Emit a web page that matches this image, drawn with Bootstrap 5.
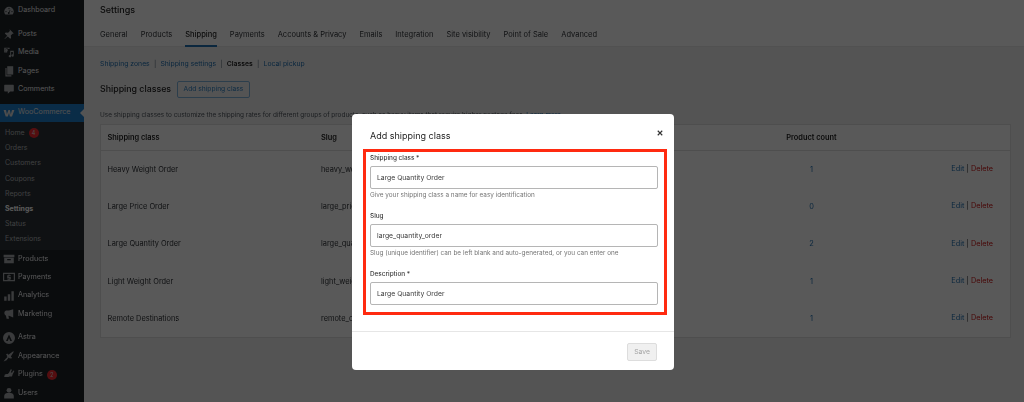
<!doctype html>
<html lang="en">
<head>
<meta charset="utf-8">
<title>Shipping classes</title>
<link href="https://cdn.jsdelivr.net/npm/bootstrap@5.3.0/dist/css/bootstrap.min.css" rel="stylesheet">
<style>
html,body{height:402px;overflow:hidden}
body{font-family:Inter,"Liberation Sans",sans-serif;background:#f0f0f1;font-size:7.5px;color:#1e1e1e}
.page-shell{height:402px;filter:blur(.6px)}
.wp-side{width:84px;flex:none;background:#1d2327;color:#f0f0f1;height:402px;overflow:hidden;padding-top:1.5px}
.side-item{height:18.4px;padding-left:18px;font-size:7.2px;position:relative;white-space:nowrap}
.side-item svg{position:absolute;left:3px;top:3px;width:12px;height:12px;fill:#a7aaad}
.side-sep{height:5.2px}
.side-woo{background:#1f7ecb;color:#e6e6e6;height:18px}
.side-woo::after{content:"";position:absolute;right:0;top:5px;border:4px solid transparent;border-right-color:#f0f0f1;border-left:0}
.side-sub{background:#2c3338;padding:4px 0 0;height:128px}
.sub-item{height:15.15px;padding-left:5px;font-size:7px;color:#b4b7ba}
.sub-item.on{color:#fff;font-weight:700}
.side-badge{width:10px;height:10px;border-radius:50%;background:#f02a30;color:#ddd;font-size:5.5px;line-height:10px;text-align:center;margin-left:4px}
.wp-main{min-width:0}
.main-head{background:#fff;height:47px;padding:0 0 0 16px;border-bottom:1px solid #e8e8e8}
.main-title{font-size:9px;font-weight:500;line-height:20px;height:26px}
.tab-row{gap:13px;height:21px}
.tab-link{font-size:7.5px;color:#2f3237;text-decoration:none;height:21px;line-height:18px;white-space:nowrap}
.tab-link.on{border-bottom:2px solid #2271b1;color:#1e1e1e;font-weight:500}
.main-body{padding:9px 12.5px 0 16px}
.sub-links{font-size:6.85px;height:16px;line-height:16px;gap:4.2px;color:#5a6a78;white-space:nowrap}
.sub-links a{color:#2271b1;text-decoration:none}
.sub-links b{font-weight:600;color:#1e1e1e}
.head-row{height:27px;margin-top:4px}
.head-title{font-size:8.8px;font-weight:500;margin:0 6px 0 0}
.add-btn{--bs-btn-font-size:6.7px;--bs-btn-padding-x:5.5px;--bs-btn-padding-y:0;--bs-btn-border-radius:2px;--bs-btn-color:#2b7fc0;--bs-btn-border-color:#7fb2da;height:17px;line-height:15px;white-space:nowrap}
.lead-text{font-size:6.43px;line-height:12px;height:16px;margin:5px 0 0;padding-top:1px;color:#50575e;white-space:nowrap}
.lead-text a{color:#2271b1;text-decoration:none}
.class-table{--bs-table-bg:#fff;--bs-table-border-color:#f0f0f0;background:#fff;border:1px solid #e0e0e0;table-layout:fixed;width:911px;margin:0;font-size:7.4px}
.class-table th{font-weight:600;font-size:7.4px;height:26px;padding:0 0 0 6.5px;vertical-align:middle;color:#1e1e1e;border-bottom:1px solid #e0e0e0}
.class-table td{height:37.4px;padding:0 0 0 6.5px;vertical-align:middle;color:#2f3237;border-bottom-width:0}
.class-table .num{text-align:center;padding:0}
.class-table .num a{color:#2271b1;text-decoration:none}
.class-table .act{text-align:right;padding:0 17px 0 0;white-space:nowrap;font-size:7.3px}
.act a{text-decoration:none;color:#2271b1}
.act a.del{color:#cc1818}
.dim-layer{position:absolute;inset:0;background:rgba(0,0,0,.65)}
.dlg{position:absolute;top:114px;left:352px;width:322px;height:256px;border:0;border-radius:4px;background:#fff;filter:blur(.4px);color:#1e1e1e}
.dlg-head{height:35px;padding:15px 11px 0 18px}
.dlg-title{font-size:9px;font-weight:400;margin:0;line-height:14px}
.dlg-x{width:6px;height:6px;margin-top:1px;fill:none;stroke:#333;stroke-width:1.5}
.mark-box{border:3px solid #ff2a10;margin:0 7px 0 11px;height:166px;padding:2px 6px 0 4px}
.fld-label{font-size:6.4px;font-weight:500;line-height:9px;height:9px;margin:0 0 3px;display:block;color:#3a3a3a}
.fld-input{border-radius:2px;height:23px;min-height:0;font-size:6.8px;padding:0 6px;color:#3a3a3a;border:1px solid #b5b5b5;box-shadow:none}
.fld-help{font-size:6.4px;line-height:9px;height:9px;margin-top:2px;color:#757575;white-space:nowrap}
.fld-block{height:58px}
.dlg-foot{border-top:1px solid #e6e6e6;margin-top:16px;height:39px;padding:11px 17px 0 0}
.save-btn{--bs-btn-font-size:6.8px;--bs-btn-padding-x:0;--bs-btn-padding-y:0;--bs-btn-border-radius:2px;--bs-btn-disabled-color:#a5a5a5;--bs-btn-disabled-bg:#f0f0f0;--bs-btn-disabled-border-color:#ddd;--bs-btn-disabled-opacity:1;width:30px;height:18px}
</style>
</head>
<body>
<div class="page-shell d-flex">
  <nav class="wp-side">
    <div class="side-item d-flex align-items-center"><svg viewBox="0 0 20 20"><path d="M10 3a8 8 0 0 0-8 8c0 2 .7 3.700 1.900 5h12.200A8 8 0 0 0 18 11a8 8 0 0 0-8-8zm0 2a1 1 0 1 1 0 2 1 1 0 0 1 0-2zm-5 5a1 1 0 1 1 0 2 1 1 0 0 1 0-2zm10 0a1 1 0 1 1 0 2 1 1 0 0 1 0-2zm-3.500-2 .9.500-1.600 3.700a1.600 1.600 0 1 1-.9-.4z"/></svg>Dashboard</div>
    <div class="side-sep"></div>
    <div class="side-item d-flex align-items-center"><svg viewBox="0 0 20 20"><path d="M11 2l7 7-2 .5-3 3 .5 4-1.500 1.500-4-4-5 4.500-.5-.5 4.500-5-4-4L4.500 7.500l4 .5 3-3z"/></svg>Posts</div>
    <div class="side-item d-flex align-items-center"><svg viewBox="0 0 20 20"><path d="M2 3h9v2H9L8 4H5L4 5v4h3v2H2zm4 2a2 2 0 0 1 0 4 2 2 0 0 1 0-4zm6 3h6v8a2 2 0 1 1-1.500-2V10h-3v7a2 2 0 1 1-1.500-2z"/></svg>Media</div>
    <div class="side-item d-flex align-items-center"><svg viewBox="0 0 20 20"><path d="M7 2h10v14H7z"/><path d="M4 5h2v12h8v2H4z"/></svg>Pages</div>
    <div class="side-item d-flex align-items-center"><svg viewBox="0 0 20 20"><path d="M3 3h14a1 1 0 0 1 1 1v9a1 1 0 0 1-1 1h-5l-4 4v-4H3a1 1 0 0 1-1-1V4a1 1 0 0 1 1-1z"/></svg>Comments</div>
    <div class="side-sep"></div>
    <div class="side-item side-woo d-flex align-items-center"><svg viewBox="0 0 20 20" style="fill:#ddd"><path d="M1 5h4l1.500 7L9 5h2.500l1.500 7 2-7h4l-4 11h-3.500L10 10l-2 6H4.500z"/></svg>WooCommerce</div>
    <div class="side-sub">
      <div class="sub-item d-flex align-items-center">Home<span class="side-badge">4</span></div>
      <div class="sub-item d-flex align-items-center">Orders</div>
      <div class="sub-item d-flex align-items-center">Customers</div>
      <div class="sub-item d-flex align-items-center">Coupons</div>
      <div class="sub-item d-flex align-items-center">Reports</div>
      <div class="sub-item on d-flex align-items-center">Settings</div>
      <div class="sub-item d-flex align-items-center">Status</div>
      <div class="sub-item d-flex align-items-center">Extensions</div>
    </div>
    <div class="side-item d-flex align-items-center"><svg viewBox="0 0 20 20"><path d="M1 3h18v4H1zM2 8h16v9H2zm5 2v2h6v-2z" fill-rule="evenodd"/></svg>Products</div>
    <div class="side-item d-flex align-items-center"><svg viewBox="0 0 20 20"><path fill-rule="evenodd" d="M0 3h20v14H0zm2 2v10h16V5zm7 1h2v1h2v1.500h-3.500v1H13V14h-2v1H9v-1H7v-1.500h3.500v-1H7V7h2z"/></svg>Payments</div>
    <div class="side-item d-flex align-items-center"><svg viewBox="0 0 20 20"><path d="M2 11h4v7H2zM8 7h4v11H8zM14 2h4v16h-4z"/></svg>Analytics</div>
    <div class="side-item d-flex align-items-center"><svg viewBox="0 0 20 20"><path d="M17 2v14l-7-3H9l1 5H6l-1-5a5 5 0 0 1 0-9h5z"/></svg>Marketing</div>
    <div class="side-sep"></div>
    <div class="side-item d-flex align-items-center"><svg viewBox="0 0 20 20"><path fill-rule="evenodd" d="M10 0a10 10 0 1 1 0 20 10 10 0 0 1 0-20zm0 4L5 15h3l2-5 2 5h3z"/></svg>Astra</div>
    <div class="side-item d-flex align-items-center"><svg viewBox="0 0 20 20"><path d="M18 3l-1-1-8 6-2-2-2 2 2 1-1 1 1.500 1.500L4 15l-3 4 5-2 3.500-4.500L11 14l1-1 1 2 2-2-2-2z"/></svg>Appearance</div>
    <div class="side-item d-flex align-items-center"><svg viewBox="0 0 20 20"><path d="M13 2l2 1-2 4 2 1 2-4 2 1-3 6-1 3-4 0-2 1H2l1-4 3-1h2l2-2z"/></svg>Plugins<span class="side-badge">2</span></div>
    <div class="side-item d-flex align-items-center"><svg viewBox="0 0 20 20"><circle cx="10" cy="5.500" r="4"/><path d="M2 19v-4c0-3 3-5 5-5h6c2 0 5 2 5 5v4z"/></svg>Users</div>
  </nav>
  <main class="wp-main flex-grow-1">
    <header class="main-head">
      <div class="main-title">Settings</div>
      <div class="tab-row d-flex">
        <a class="tab-link" href="#">General</a>
        <a class="tab-link" href="#">Products</a>
        <a class="tab-link on" href="#">Shipping</a>
        <a class="tab-link" href="#">Payments</a>
        <a class="tab-link" href="#">Accounts &amp; Privacy</a>
        <a class="tab-link" href="#">Emails</a>
        <a class="tab-link" href="#">Integration</a>
        <a class="tab-link" href="#">Site visibility</a>
        <a class="tab-link" href="#">Point of Sale</a>
        <a class="tab-link" href="#">Advanced</a>
      </div>
    </header>
    <div class="main-body">
      <div class="sub-links d-flex"><a href="#">Shipping zones</a> | <a href="#">Shipping settings</a> | <b>Classes</b> | <a href="#">Local pickup</a></div>
      <div class="head-row d-flex align-items-center">
        <h2 class="head-title">Shipping classes</h2>
        <button class="btn add-btn" type="button">Add shipping class</button>
      </div>
      <p class="lead-text">Use shipping classes to customize the shipping rates for different groups of products, such as heavy items that require higher postage fees. <a href="#">Learn more</a></p>
      <table class="table class-table">
        <colgroup><col style="width:214px"><col style="width:432px"><col style="width:130px"><col></colgroup>
        <thead><tr><th>Shipping class</th><th>Slug</th><th class="num">Product count</th><th></th></tr></thead>
        <tbody>
          <tr><td>Heavy Weight Order</td><td>heavy_weight_order</td><td class="num"><a href="#">1</a></td><td class="act"><a href="#">Edit</a> | <a class="del" href="#">Delete</a></td></tr>
          <tr><td>Large Price Order</td><td>large_price_order</td><td class="num"><a href="#">0</a></td><td class="act"><a href="#">Edit</a> | <a class="del" href="#">Delete</a></td></tr>
          <tr><td>Large Quantity Order</td><td>large_quantity_order</td><td class="num"><a href="#">2</a></td><td class="act"><a href="#">Edit</a> | <a class="del" href="#">Delete</a></td></tr>
          <tr><td>Light Weight Order</td><td>light_weight_order</td><td class="num"><a href="#">1</a></td><td class="act"><a href="#">Edit</a> | <a class="del" href="#">Delete</a></td></tr>
          <tr><td>Remote Destinations</td><td>remote_destinations</td><td class="num"><a href="#">1</a></td><td class="act"><a href="#">Edit</a> | <a class="del" href="#">Delete</a></td></tr>
        </tbody>
      </table>
    </div>
  </main>
</div>
<div class="dim-layer"></div>
<div class="dlg modal-content">
  <div class="dlg-head d-flex justify-content-between align-items-start">
    <h5 class="dlg-title">Add shipping class</h5>
    <svg class="dlg-x" viewBox="0 0 8 8"><path d="M1 1l6 6M7 1L1 7"/></svg>
  </div>
  <div class="mark-box">
    <div class="fld-block">
      <label class="fld-label">Shipping class *</label>
      <input class="form-control fld-input" type="text" value="Large Quantity Order">
      <div class="fld-help">Give your shipping class a name for easy identification</div>
    </div>
    <div class="fld-block">
      <label class="fld-label">Slug</label>
      <input class="form-control fld-input" type="text" value="large_quantity_order">
      <div class="fld-help">Slug (unique identifier) can be left blank and auto-generated, or you can enter one</div>
    </div>
    <div class="fld-block">
      <label class="fld-label">Description *</label>
      <input class="form-control fld-input" type="text" value="Large Quantity Order">
    </div>
  </div>
  <div class="dlg-foot d-flex justify-content-end">
    <button class="btn save-btn" type="button" disabled>Save</button>
  </div>
</div>
<script src="https://cdn.jsdelivr.net/npm/bootstrap@5.3.0/dist/js/bootstrap.bundle.min.js"></script>
</body>
</html>
